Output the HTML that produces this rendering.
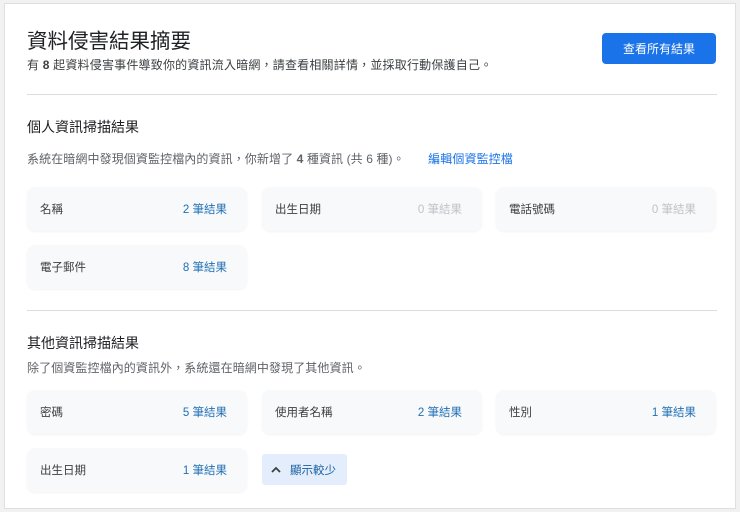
<!DOCTYPE html>
<html><head><meta charset="utf-8"><style>
*{box-sizing:border-box;margin:0;padding:0}
body{width:740px;height:512px;background:#f1f1f1;font-family:"Liberation Sans","Noto Sans CJK TC",sans-serif;color:#3c4043;position:relative;overflow:hidden}
.card{position:absolute;left:4px;top:3px;width:732px;height:506px;background:#fff;border:1px solid #e0e0e0}
.a{position:absolute;white-space:nowrap}
.h1{left:22px;top:20px;font-size:20.5px;color:#202124}
.sub{left:22px;top:52px;font-size:12px;letter-spacing:.2px;color:#3c4043}
.btn{left:597px;top:29px;width:114px;height:31px;background:#1a73e8;border-radius:4px;color:#fff;font-size:12px;display:flex;align-items:center;justify-content:center}
.hr{left:22px;width:690px;height:1px;background:#dadce0}
.h2{font-size:14px;color:#202124}
.d{font-size:12px;color:#5f6368;letter-spacing:.1px}
.link{color:#1a73e8}
.c{position:absolute;width:220px;height:44px;background:#f8f9fb;border-radius:8px;box-shadow:0 1px 2px rgba(0,0,0,.05);font-size:11.5px;display:flex;align-items:center;justify-content:space-between;padding:0 20px 0 13px;color:#3c4043}
.c span{color:#1f6fb4}
.c span.g{color:#bfc3c7}
.less{left:257px;top:450px;width:85px;height:31px;background:#e3edfb;border-radius:3px;font-size:11.5px;color:#1a5fa0;display:flex;align-items:center;padding-left:9px;gap:9px}
</style></head><body>
<div class="card">
<div class="a h1">資料侵害結果摘要</div>
<div class="a sub">有 <b>8</b> 起資料侵害事件導致你的資訊流入暗網，請查看相關詳情，並採取行動保護自己。</div>
<div class="a btn">查看所有結果</div>
<div class="a hr" style="top:90px"></div>
<div class="a h2" style="left:22px;top:113px">個人資訊掃描結果</div>
<div class="a d" style="left:22px;top:146px">系統在暗網中發現個資監控檔內的資訊，你新增了 <b>4</b> 種資訊 (共 6 種)。 <span class="link" style="margin-left:20px">編輯個資監控檔</span></div>
<div class="c" style="left:22px;top:183px">名稱<span>2 筆結果</span></div>
<div class="c" style="left:257px;top:183px">出生日期<span class="g">0 筆結果</span></div>
<div class="c" style="left:491px;top:183px">電話號碼<span class="g">0 筆結果</span></div>
<div class="c" style="left:22px;top:241px">電子郵件<span>8 筆結果</span></div>
<div class="a hr" style="top:306px"></div>
<div class="a h2" style="left:22px;top:329px">其他資訊掃描結果</div>
<div class="a d" style="left:22px;top:355px">除了個資監控檔內的資訊外，系統還在暗網中發現了其他資訊。</div>
<div class="c" style="left:22px;top:386px">密碼<span>5 筆結果</span></div>
<div class="c" style="left:257px;top:386px">使用者名稱<span>2 筆結果</span></div>
<div class="c" style="left:491px;top:386px">性別<span>1 筆結果</span></div>
<div class="c" style="left:22px;top:444px">出生日期<span>1 筆結果</span></div>
<div class="a less"><svg width="10" height="7" viewBox="0 0 10 7"><path d="M1 6L5 2L9 6" stroke="#3c4043" stroke-width="1.8" fill="none"/></svg>顯示較少</div>
</div>
</body></html>
